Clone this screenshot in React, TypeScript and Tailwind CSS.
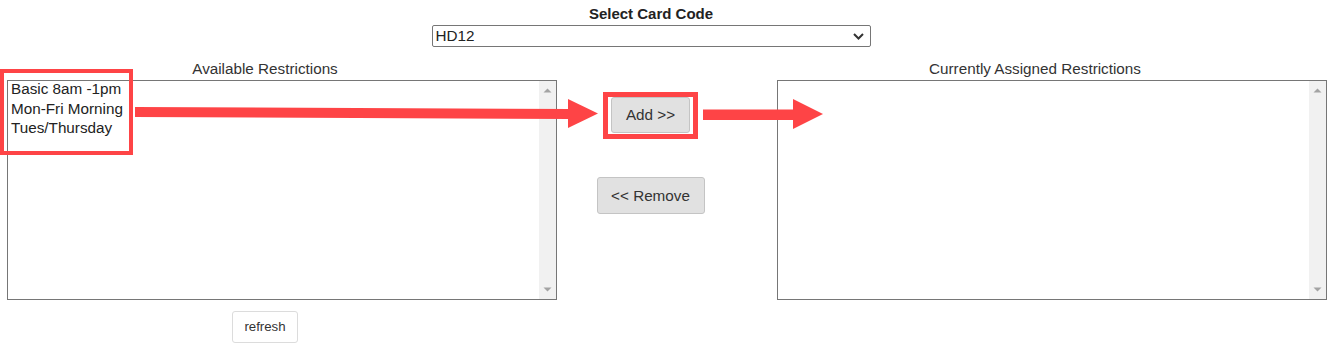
import React from "react";

const items = ["Basic 8am -1pm", "Mon-Fri Morning", "Tues/Thursday"];

function ListBox({ children }: { children?: React.ReactNode }) {
  return (
    <div className="flex h-[220px] w-[550px] border border-[#767676] bg-white">
      <div className="-mt-[2px] flex-1 pl-[3px] text-[15.25px] leading-[19.5px] text-[#222]">{children}</div>
      <div className="flex w-[17px] flex-col items-center justify-between bg-[#f1f1f1] py-[7px]">
        <svg width="9" height="5" viewBox="0 0 9 5">
          <path d="M0.5 4.5 L4.5 0.5 L8.5 4.5 Z" fill="#a3a3a3" />
        </svg>
        <svg width="9" height="5" viewBox="0 0 9 5">
          <path d="M0.5 0.5 L4.5 4.5 L8.5 0.5 Z" fill="#a3a3a3" />
        </svg>
      </div>
    </div>
  );
}

export default function App() {
  return (
    <div
      className="relative h-[345px] w-[1337px] overflow-hidden bg-white text-[#333]"
      style={{ fontFamily: '"Liberation Sans", Arial, sans-serif' }}
    >
      <div className="flex w-[1302px] flex-col items-center pt-[5px]">
        <div className="text-[15px] font-bold leading-[17px] text-[#222]">Select Card Code</div>
        <div className="mt-[3px] flex h-[22px] w-[439px] items-center justify-between rounded-[2px] border border-[#767676] bg-white pl-[3px] pr-[6px] text-[15.25px] text-[#222]">
          <span>HD12</span>
          <svg width="11" height="7" viewBox="0 0 11 7">
            <path d="M1 1 L5.5 5.5 L10 1" fill="none" stroke="#333" strokeWidth="2" />
          </svg>
        </div>
      </div>

      <div className="mt-[13px] flex pl-[7px]">
        <div className="flex w-[550px] flex-col">
          <div className="pr-[34px] text-center text-[15.25px] leading-[17px]">Available Restrictions</div>
          <div className="mt-[3px]">
            <ListBox>
              {items.map((t) => (
                <div key={t}>{t}</div>
              ))}
            </ListBox>
          </div>
          <div className="mt-[11px] flex justify-center pr-[34px]">
            <button className="h-[32px] rounded-[3px] border border-[#dcdcdc] bg-white px-[11px] text-[13.25px] text-[#333]">
              refresh
            </button>
          </div>
        </div>

        <div className="flex w-[220px]">
          <div className="flex w-[187px] flex-col items-center pt-[37px]">
            <button className="h-[36px] w-[79px] rounded-[3px] border border-[#c4c4c4] bg-[#e1e1e1] text-[15.25px] text-[#333]">
              Add &gt;&gt;
            </button>
            <button className="mt-[44px] h-[37px] w-[108px] rounded-[3px] border border-[#c4c4c4] bg-[#e1e1e1] pt-[2px] text-[15.25px] text-[#333]">
              &lt;&lt; Remove
            </button>
          </div>
        </div>

        <div className="flex w-[550px] flex-col">
          <div className="pr-[34px] text-center text-[15.25px] leading-[17px]">Currently Assigned Restrictions</div>
          <div className="mt-[3px]">
            <ListBox />
          </div>
        </div>
      </div>

      <svg className="pointer-events-none absolute left-0 top-0" width="1337" height="345" viewBox="0 0 1337 345">
        <rect x="2" y="71" width="129" height="82" fill="none" stroke="#fe4446" strokeWidth="4" />
        <rect x="605.5" y="94.5" width="90" height="42" fill="none" stroke="#fe4446" strokeWidth="5" />
        <polygon points="135,107 570,109 570,119 135,117" fill="#fe4446" />
        <polygon points="568,99 598,113.5 568,128" fill="#fe4446" />
        <polygon points="703,109.5 795,109.5 795,120 703,120" fill="#fe4446" />
        <polygon points="793,99 823,114 793,129" fill="#fe4446" />
      </svg>
    </div>
  );
}
